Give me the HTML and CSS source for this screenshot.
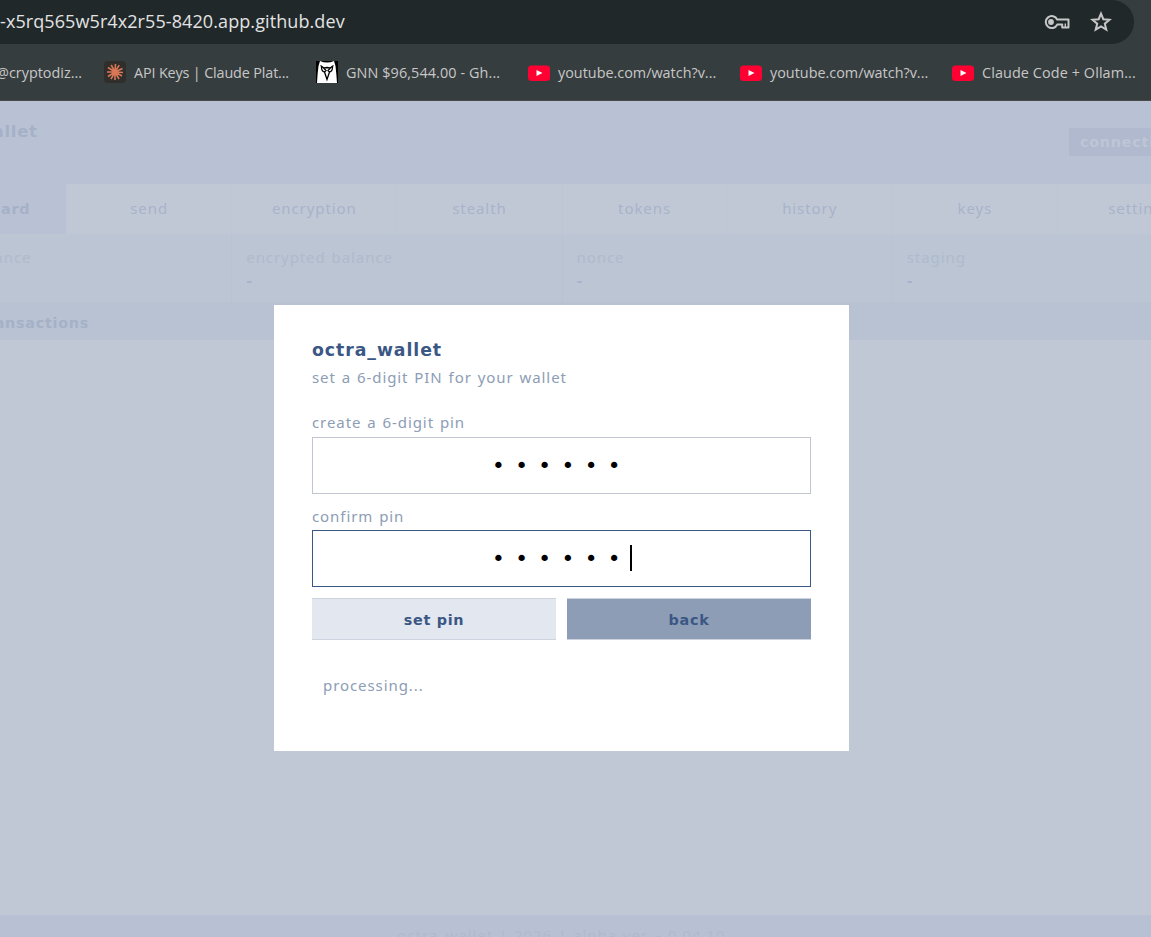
FILE: index.html
```
<!DOCTYPE html>
<html lang="en">
    <head>
        <meta charset="UTF-8" />
        <meta name="viewport" content="width=device-width, initial-scale=1.0" />
        <title>octra_wallet</title>
        <link rel="stylesheet" href="styles.css">
    </head>
    <body>
        <div class="browser">
            <div class="address">
                <span class="url">-x5rq565w5r4x2r55-8420.app.github.dev</span>
                <svg class="key" width="26" height="16" viewBox="0 0 26 16">
                    <path d="M13.2 5.6H24.5V13.4H18.2V10.6H13.2A6 6 0 1 1 13.2 5.6Z" fill="none" stroke="#c7c7c7" stroke-width="2" stroke-linejoin="round" />
                    <circle cx="7" cy="8" r="2.9" fill="#c7c7c7" />
                    <path d="M21.3 9.5V13" fill="none" stroke="#c7c7c7" stroke-width="1.4" />
                </svg>
                <svg class="star" width="22" height="22" viewBox="0 0 22 22">
                    <path d="M11 2.6L13.3 8.2L19.6 8.7L14.8 12.7L16.3 18.7L11 15.5L5.7 18.7L7.2 12.7L2.4 8.7L8.7 8.2Z" fill="none" stroke="#c7c7c7" stroke-width="2" />
                </svg>
            </div>
            <div class="bookmarks">
                <div class="bookmark first"><span>@cryptodiz...</span></div>
                <div class="bookmark claude">
                    <svg width="22" height="22" viewBox="0 0 22 22">
                        <rect width="22" height="22" rx="4" fill="#302e2b" />
                        <path d="M11 11L11.5 3M11 11L15.2 4.2M11 11L18.5 7.5M11 11L19 11.5M11 11L18 15M11 11L15 18M11 11L11 19M11 11L7 18M11 11L4 15.5M11 11L3 11M11 11L4 6.5M11 11L7.2 4" stroke="#d97757" stroke-width="1.6" />
                    </svg>
                    <span>API Keys | Claude Plat...</span>
                </div>
                <div class="bookmark gnn">
                    <svg width="22" height="22" viewBox="0 0 22 22">
                        <rect width="22" height="22" fill="#000" />
                        <path d="M4 0Q11 3 18 0L19.5 5Q20.5 14 21 22H1Q1.5 12 2.5 5Z" fill="#fff" />
                        <path d="M4.5 4.5L8 7L11 6.5L14 7L17.5 4.5M5.5 6Q5.5 10.5 8.5 11L10 9.5L7.5 7M16.5 6Q16.5 10.5 13.5 11L12 9.5L14.5 7M8.5 11L11 18.5L13.5 11" fill="none" stroke="#000" stroke-width="1.3" />
                    </svg>
                    <span>GNN $96,544.00 - Gh...</span>
                </div>
                <div class="bookmark yt">
                    <svg width="22" height="16" viewBox="0 0 22 16">
                        <rect y="0.5" width="22" height="15.5" rx="3.5" fill="#f03" />
                        <path d="M8.5 5L14.5 8L8.5 11Z" fill="#fff" />
                    </svg>
                    <span>youtube.com/watch?v...</span>
                </div>
                <div class="bookmark yt">
                    <svg width="22" height="16" viewBox="0 0 22 16">
                        <rect y="0.5" width="22" height="15.5" rx="3.5" fill="#f03" />
                        <path d="M8.5 5L14.5 8L8.5 11Z" fill="#fff" />
                    </svg>
                    <span>youtube.com/watch?v...</span>
                </div>
                <div class="bookmark ollama">
                    <svg width="22" height="16" viewBox="0 0 22 16">
                        <rect y="0.5" width="22" height="15.5" rx="3.5" fill="#f03" />
                        <path d="M8.5 5L14.5 8L8.5 11Z" fill="#fff" />
                    </svg>
                    <span>Claude Code + Ollam...</span>
                </div>
            </div>
        </div>

        <div class="app">
            <header>
                <h1>octra_wallet</h1>
                <span class="status">connecting</span>
            </header>
            <nav>
                <a class="active">dashboard</a>
                <a>send</a>
                <a>encryption</a>
                <a>stealth</a>
                <a>tokens</a>
                <a>history</a>
                <a>keys</a>
                <a>settings</a>
            </nav>
            <div class="stats">
                <div><label>public balance</label><b>-</b></div>
                <div><label>encrypted balance</label><b>-</b></div>
                <div><label>nonce</label><b>-</b></div>
                <div><label>staging</label><b>-</b></div>
            </div>
            <h2>recent transactions</h2>
            <main></main>
            <footer>octra_wallet | 2026 | alpha ver. - 0.04.10</footer>

            <div class="overlay">
                <div class="modal">
                    <h3>octra_wallet</h3>
                    <p class="subtitle">set a 6-digit PIN for your wallet</p>
                    <p class="label create">create a 6-digit pin</p>
                    <div class="pin">••••••</div>
                    <p class="label confirm">confirm pin</p>
                    <div class="pin focus">••••••<i class="caret"></i></div>
                    <div class="buttons">
                        <button>set pin</button>
                        <button class="back">back</button>
                    </div>
                    <p class="processing">processing...</p>
                </div>
            </div>
        </div>
    </body>
</html>
```
FILE: styles.css
```
* {
    padding: 0;
    margin: 0;
    box-sizing: border-box;
}
html {
    overflow: hidden;
}
body {
    width: 1151px;
    height: 937px;
    overflow: hidden;
    font-family: "Noto Sans", sans-serif;
    font-size: 15px;
    letter-spacing: 0.92px;
    word-spacing: 1.1px;
}

/* browser */
.browser {
    height: 101px;
    background-color: #363d3f;
    border-bottom: 1px solid #4b4a4a;
    font-family: "Open Sans", sans-serif;
    letter-spacing: 0;
    word-spacing: 0;
}
.address {
    display: flex;
    align-items: center;
    width: 1134px;
    height: 44px;
    padding-right: 22px;
    background-color: #20282a;
    border-radius: 0 22px 22px 0;
}
.url {
    flex: 1;
    margin-top: -2px;
    color: #e3e3e3;
    font-size: 18px;
    letter-spacing: 0.09px;
    white-space: nowrap;
}
.key {
    margin-right: 20px;
}
.bookmarks {
    display: flex;
    height: 57px;
    color: #c7c7c7;
    font-size: 14.4px;
}
.bookmark {
    display: flex;
    align-items: center;
    gap: 8px;
    width: 212px;
    height: 56px;
    flex-shrink: 0;
    white-space: nowrap;
}
.first {
    width: 104px;
}
.first span {
    margin-left: -4px;
}
.claude span {
    letter-spacing: -0.15px;
}
.yt svg,
.ollama svg {
    margin-top: 1px;
}
.gnn span,
.ollama span {
    letter-spacing: 0.1px;
}

/* wallet page behind the dialog */
.app {
    position: relative;
    display: flex;
    flex-direction: column;
    width: 1321px;
    height: 854px;
    margin-left: -99px;
    background-color: #c1c8d5;
    color: #a7b3ca;
}
h1,
h2,
h3,
b,
button,
.status,
nav .active {
    font-family: "DejaVu Sans", sans-serif;
    font-size: 14.4px;
    font-weight: bold;
    letter-spacing: 0.7px;
}
header {
    display: flex;
    justify-content: space-between;
    height: 83px;
    padding: 20px 15px;
    background-color: #b9c2d4;
}
h1 {
    color: #a5b1c7;
    font-size: 16.5px;
    line-height: 21px;
}
.status {
    width: 138px;
    height: 28px;
    margin-top: 7px;
    padding-left: 11px;
    background-color: #b0b9cd;
    color: #bdc6d7;
    line-height: 28px;
}
nav {
    display: grid;
    grid-template-columns: repeat(8, 1fr);
    height: 51px;
    line-height: 48px;
    text-align: center;
}
nav a {
    border-left: 1px solid #bdc6d4;
    border-bottom: 1px solid #bdc6d4;
}
nav .active {
    background-color: #b9c2d4;
    color: #a5b1c8;
    line-height: 50px;
}
.stats {
    display: grid;
    grid-template-columns: repeat(4, 1fr);
    height: 68px;
    background-color: #bbc5d4;
    border-bottom: 1px solid #b8c3d2;
}
.stats div {
    padding: 11px 14px;
    border-left: 1px solid #b8c3d2;
}
.stats label {
    display: block;
    color: #afbacd;
    line-height: 22px;
}
.stats b {
    display: block;
    line-height: 26px;
}
h2 {
    height: 37px;
    padding-left: 15px;
    background-color: #b8c2d3;
    color: #a5b1c7;
    line-height: 41px;
}
main {
    flex: 1;
}
footer {
    height: 40px;
    background-color: #b7c1d3;
    color: #afbacd;
    line-height: 40px;
    text-align: center;
}

/* pin dialog */
.overlay {
    position: absolute;
    inset: 0;
    display: flex;
    align-items: center;
    justify-content: center;
}
.modal {
    width: 575px;
    height: 446px;
    padding: 34px 38px;
    background-color: #fff;
    color: #8c9db5;
}
h3 {
    color: #3b5784;
    font-size: 17.3px;
    letter-spacing: 0.95px;
    line-height: 22px;
}
.subtitle {
    margin-top: 5px;
    line-height: 22px;
}
.label {
    line-height: 20px;
}
.create {
    margin: 24px 0 5px;
}
.confirm {
    margin: 12px 0 4px;
}
.pin {
    display: flex;
    align-items: center;
    justify-content: center;
    height: 57px;
    border: 1px solid #c1c5d1;
    color: #000;
    font-family: "DejaVu Sans", sans-serif;
    font-size: 21.6px;
    letter-spacing: 10.4px;
}
.focus {
    position: relative;
    border-color: #3b5784;
}
.caret {
    position: absolute;
    left: 317px;
    top: 14px;
    width: 2px;
    height: 26px;
    background-color: #000;
}
.buttons {
    display: flex;
    gap: 11px;
    margin-top: 11px;
}
button {
    flex: 1;
    height: 42px;
    padding-top: 1px;
    border: solid #ccd3df;
    border-width: 1px 0;
    background-color: #e3e7ef;
    color: #3b5784;
}
.back {
    background-color: #8c9db5;
}
.processing {
    margin: 34px 0 0 11px;
    line-height: 22px;
}
```
